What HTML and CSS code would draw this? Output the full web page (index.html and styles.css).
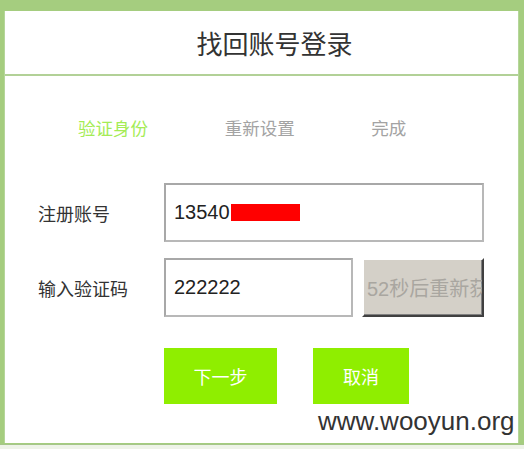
FILE: index.html
```html
<!DOCTYPE html>
<html lang="zh">
<head>
<meta charset="utf-8">
<title>找回账号登录</title>
<link rel="stylesheet" href="styles.css">
</head>
<body>
<div class="frame">
  <div class="panel">
    <div class="header"><h1 class="title">找回账号登录</h1></div>
    <div class="steps">
      <span class="step active">验证身份</span>
      <span class="step">重新设置</span>
      <span class="step">完成</span>
    </div>
    <div class="form">
      <div class="row">
        <label class="label">注册账号</label>
        <div class="input wide"><span class="val">13540</span><span class="redact"></span></div>
      </div>
      <div class="row">
        <label class="label">输入验证码</label>
        <div class="input short"><span class="val">222222</span></div>
        <div class="sendbtn"><span>52秒后重新获</span></div>
      </div>
      <div class="actions">
        <div class="btn next">下一步</div>
        <div class="btn cancel">取消</div>
      </div>
    </div>
    <div class="watermark">www.wooyun.org</div>
  </div>
</div>
</body>
</html>
```
FILE: styles.css
```css
html, body {
  margin: 0;
  padding: 0;
}
body {
  width: 524px;
  height: 449px;
  overflow: hidden;
  background: #eef3e8;
  font-family: "Noto Sans CJK SC", "Liberation Sans", sans-serif;
}
.frame {
  background: #a5cd7f;
  padding: 11px 4px 0 4px;
  height: 433px;
  border-bottom: 1px solid #a6c68a;
}
.panel {
  position: relative;
  background: #fff;
  height: 432px;
  margin-right: 1px;
  border-left: 1px solid #b5d69a;
  border-right: 1px solid #b5d69a;
}
.header {
  height: 63px;
  border-bottom: 2px solid #b2d197;
  display: flex;
  align-items: center;
  justify-content: center;
  padding-left: 26px;
}
.title {
  margin: 0;
  font-size: 26px;
  font-weight: normal;
  color: #333;
  line-height: 1;
}
.steps {
  display: flex;
  padding: 41px 0 0 73px;
  height: 22px;
}
.step {
  width: 147px;
  font-size: 17.5px;
  line-height: 22px;
  color: #a3a3a3;
}
.step.active {
  color: #a4ec55;
}
.form {
  padding: 44px 0 0 33px;
}
.row {
  display: flex;
  align-items: center;
  height: 59px;
  margin-bottom: 16px;
}
.label {
  width: 126px;
  font-size: 18px;
  color: #333;
}
.input {
  box-sizing: border-box;
  height: 59px;
  border: 2px solid #a8a8a8;
  border-right-color: #b8b8b8;
  border-bottom-color: #b8b8b8;
  display: flex;
  align-items: center;
  padding-left: 8px;
  font-family: "Liberation Sans", Arial, sans-serif;
  font-size: 20px;
  color: #222;
}
.input.wide {
  width: 320px;
}
.input.short {
  width: 189px;
}
.redact {
  display: inline-block;
  width: 69px;
  height: 17px;
  background: #ff0000;
  margin-left: 1px;
}
.sendbtn {
  box-sizing: border-box;
  margin-left: 9px;
  width: 122px;
  height: 59px;
  background: #d4d0c8;
  border: 2px solid;
  border-color: #fff #404040 #404040 #fff;
  box-shadow: inset -1px -1px 0 #808080;
  overflow: hidden;
  display: flex;
  align-items: center;
  padding-left: 3px;
  white-space: nowrap;
  font-family: "Liberation Sans", "Noto Sans CJK SC", sans-serif;
  font-size: 20px;
  color: #a9a6a0;
}
.actions {
  display: flex;
  padding: 15px 0 0 126px;
  gap: 36px;
}
.btn {
  height: 56px;
  background: #8fee00;
  color: #fff;
  font-size: 18px;
  display: flex;
  align-items: center;
  justify-content: center;
}
.btn.next {
  width: 113px;
}
.btn.cancel {
  width: 96px;
}
.watermark {
  position: absolute;
  left: 313px;
  top: 395px;
  font-family: "Liberation Sans", Arial, sans-serif;
  font-size: 26px;
  line-height: 30px;
  color: #333;
  background: #fff;
}
```
